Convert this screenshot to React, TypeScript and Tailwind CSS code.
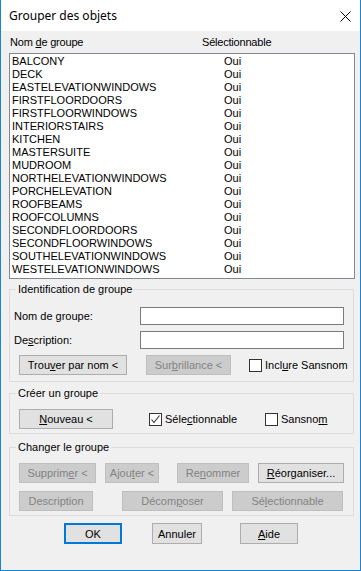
import React from "react";

const rows = [
  "BALCONY",
  "DECK",
  "EASTELEVATIONWINDOWS",
  "FIRSTFLOORDOORS",
  "FIRSTFLOORWINDOWS",
  "INTERIORSTAIRS",
  "KITCHEN",
  "MASTERSUITE",
  "MUDROOM",
  "NORTHELEVATIONWINDOWS",
  "PORCHELEVATION",
  "ROOFBEAMS",
  "ROOFCOLUMNS",
  "SECONDFLOORDOORS",
  "SECONDFLOORWINDOWS",
  "SOUTHELEVATIONWINDOWS",
  "WESTELEVATIONWINDOWS",
];

function U({ children }: { children: React.ReactNode }) {
  return <span className="underline underline-offset-[1px]">{children}</span>;
}

function Btn({
  w,
  ml,
  disabled,
  children,
}: {
  w: string;
  ml: string;
  disabled?: boolean;
  children: React.ReactNode;
}) {
  return (
    <div
      className={
        "h-[20px] flex items-center justify-center border leading-[14px] " +
        w +
        " " +
        ml +
        " " +
        (disabled
          ? "bg-[#cccccc] border-[#bfbfbf] text-[#838383]"
          : "bg-[#e1e1e1] border-[#adadad] text-black")
      }
    >
      {children}
    </div>
  );
}

function Check({ checked }: { checked?: boolean }) {
  return (
    <div className="w-[13px] h-[13px] border border-[#333333] bg-white flex items-center justify-center shrink-0">
      {checked && (
        <svg width="11" height="11" viewBox="0 0 11 11">
          <path d="M1.5 5.5 L4 8.5 L9.5 1.5" fill="none" stroke="#333333" strokeWidth="1.1" />
        </svg>
      )}
    </div>
  );
}

function Group({
  title,
  className,
  children,
}: {
  title: string;
  className: string;
  children: React.ReactNode;
}) {
  return (
    <div className={"relative w-[345px] border border-[#dcdcdc] " + className}>
      <span className="absolute top-[-8px] left-[6px] px-[2px] bg-[#f0f0f0] leading-[14px]">
        {title}
      </span>
      {children}
    </div>
  );
}

export default function App() {
  return (
    <div className="w-[361px] h-[571px] flex flex-col bg-[#f0f0f0] border-x border-b border-[#1883d7] font-['Liberation_Sans',Arial,sans-serif] text-[11px] text-black overflow-hidden">
      {/* title bar */}
      <div className="h-[31px] shrink-0 bg-white flex items-center justify-between pl-[8px] pr-[9px]">
        <span className="font-['Noto_Sans',sans-serif] text-[12px] leading-[16px] mt-[1px]">
          Grouper des objets
        </span>
        <svg width="11" height="11" viewBox="0 0 11 11" className="mt-[1px]">
          <path d="M0.5 0.5 L10.5 10.5 M10.5 0.5 L0.5 10.5" stroke="#000" strokeWidth="1" />
        </svg>
      </div>

      <div className="pl-[8px] flex flex-col">
        {/* header */}
        <div className="mt-[4px] h-[14px] leading-[14px] flex tracking-[-0.2px]">
          <span className="ml-[1px] w-[192px]">
            Nom <U>d</U>e groupe
          </span>
          <span>Sélectionnable</span>
        </div>

        {/* list */}
        <div className="mt-[4px] w-[346px] h-[226px] border border-[#828790] bg-white pt-[1px] pl-[2px]">
          {rows.map((r) => (
            <div key={r} className="h-[13px] leading-[13px] grid grid-cols-[212px_1fr]">
              <span>{r}</span>
              <span>Oui</span>
            </div>
          ))}
        </div>

        {/* Identification de groupe */}
        <Group title="Identification de groupe" className="mt-[10px] pt-[17px] pb-[6px]">
          <div className="flex items-center h-[18px]">
            <span className="ml-[4px] w-[126px]">
              Nom de <U>g</U>roupe:
            </span>
            <div className="w-[204px] h-[18px] border border-[#7a7a7a] bg-white" />
          </div>
          <div className="flex items-center h-[18px] mt-[6px]">
            <span className="ml-[4px] w-[126px]">
              De<U>s</U>cription:
            </span>
            <div className="w-[204px] h-[18px] border border-[#7a7a7a] bg-white" />
          </div>
          <div className="flex items-center mt-[6px]">
            <Btn w="w-[108px]" ml="ml-[9px]">
              <span>
                Trou<U>v</U>er par nom &lt;
              </span>
            </Btn>
            <Btn w="w-[85px]" ml="ml-[19px]" disabled>
              <span>
                Sur<U>b</U>rillance &lt;
              </span>
            </Btn>
            <div className="ml-[18px] flex items-center">
              <Check />
              <span className="ml-[3px] leading-[14px]">
                Incl<U>u</U>re Sansnom
              </span>
            </div>
          </div>
        </Group>

        {/* Créer un groupe */}
        <Group title="Créer un groupe" className="mt-[11px] pt-[15px] pb-[4px]">
          <div className="flex items-center">
            <Btn w="w-[94px]" ml="ml-[9px]">
              <span>
                <U>N</U>ouveau &lt;
              </span>
            </Btn>
            <div className="ml-[36px] w-[116px] flex items-center">
              <Check checked />
              <span className="ml-[3px] leading-[14px]">
                Séle<U>c</U>tionnable
              </span>
            </div>
            <div className="flex items-center">
              <Check />
              <span className="ml-[3px] leading-[14px]">
                Sansno<U>m</U>
              </span>
            </div>
          </div>
        </Group>

        {/* Changer le groupe */}
        <Group title="Changer le groupe" className="mt-[13px] pt-[15px] pb-[4px]">
          <div className="flex items-center">
            <Btn w="w-[77px]" ml="ml-[9px]" disabled>
              <span>
                Supprim<U>e</U>r &lt;
              </span>
            </Btn>
            <Btn w="w-[54px]" ml="ml-[9px]" disabled>
              <span>
                Ajou<U>t</U>er &lt;
              </span>
            </Btn>
            <Btn w="w-[72px]" ml="ml-[18px]" disabled>
              <span>
                Re<U>n</U>ommer
              </span>
            </Btn>
            <Btn w="w-[86px]" ml="ml-[9px]">
              <span>
                <U>R</U>éorganiser...
              </span>
            </Btn>
          </div>
          <div className="flex items-center mt-[8px]">
            <Btn w="w-[74px]" ml="ml-[9px]" disabled>
              <span>Description</span>
            </Btn>
            <Btn w="w-[101px]" ml="ml-[29px]" disabled>
              <span>
                Décom<U>p</U>oser
              </span>
            </Btn>
            <Btn w="w-[111px]" ml="ml-[9px]" disabled>
              <span>
                Sé<U>l</U>ectionnable
              </span>
            </Btn>
          </div>
        </Group>

        {/* bottom buttons */}
        <div className="flex items-center mt-[7px]">
          <div className="ml-[55px] w-[58px] h-[21px] border-2 border-[#0078d7] bg-[#e1e1e1] flex items-center justify-center leading-[14px]">
            OK
          </div>
          <div className="ml-[30px] w-[50px] h-[21px] border border-[#adadad] bg-[#e1e1e1] flex items-center justify-center leading-[14px]">
            Annuler
          </div>
          <div className="ml-[38px] w-[58px] h-[21px] border border-[#adadad] bg-[#e1e1e1] flex items-center justify-center leading-[14px]">
            <span>
              <U>A</U>ide
            </span>
          </div>
        </div>
      </div>
    </div>
  );
}
